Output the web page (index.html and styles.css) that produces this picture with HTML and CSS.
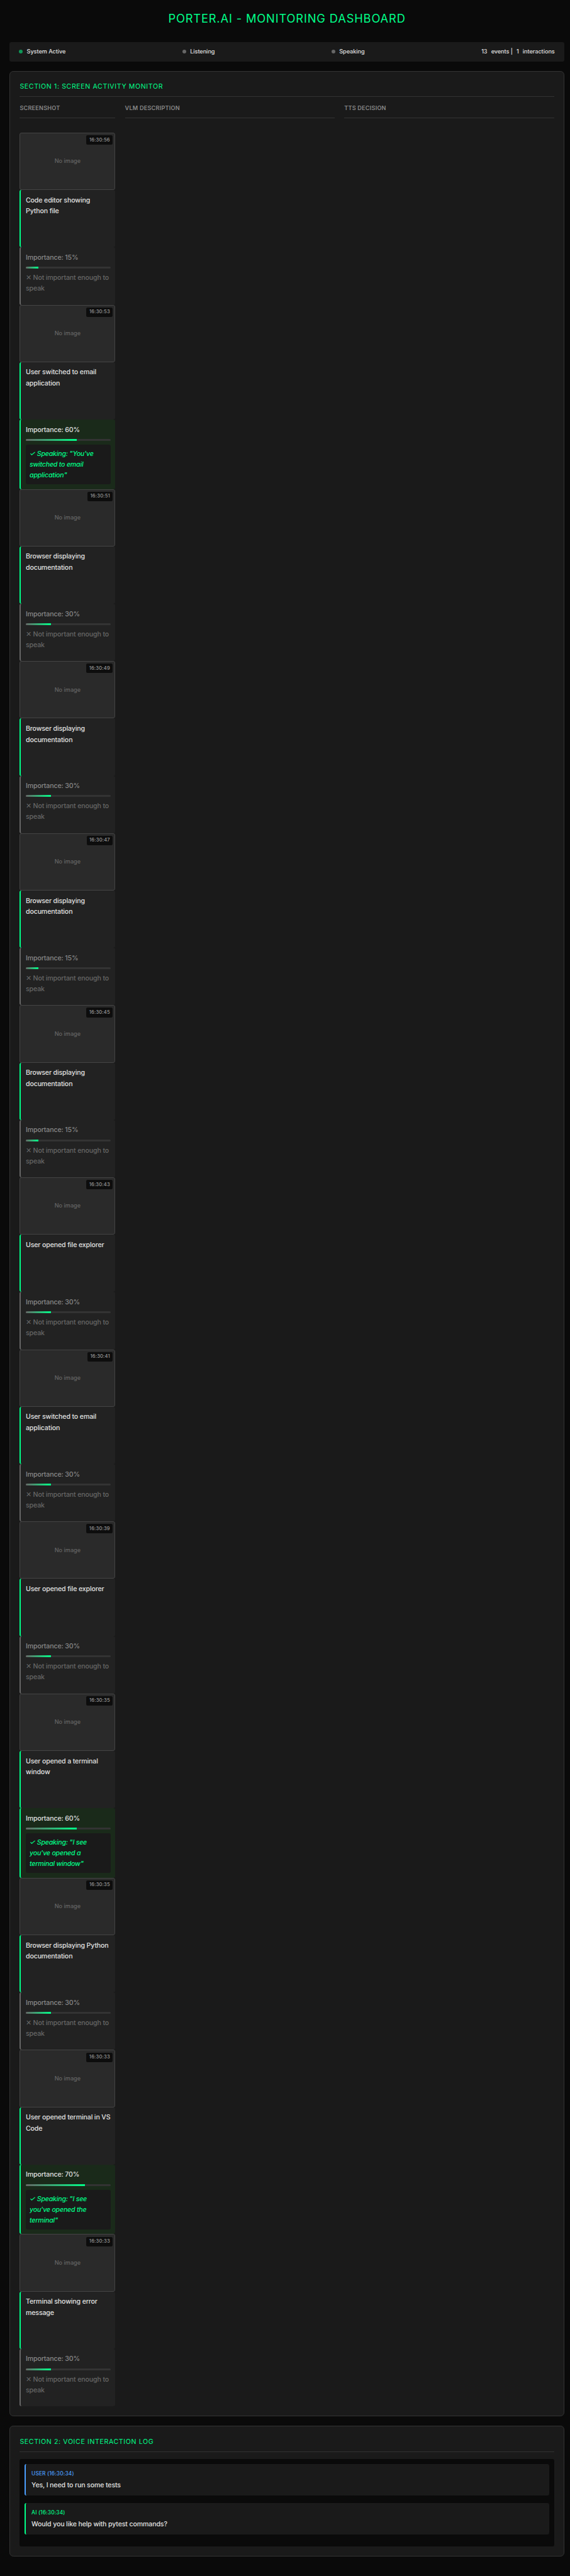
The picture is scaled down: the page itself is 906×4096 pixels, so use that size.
FILE: index.html
```html
<!DOCTYPE html>
<html lang="en">
<head>
<meta charset="utf-8">
<title>Porter.AI - Monitoring Dashboard</title>
<link rel="stylesheet" href="styles.css">
</head>
<body>
<div class="container">
  <h1>PORTER.AI - MONITORING DASHBOARD</h1>
  <div class="status-bar">
    <div class="status-item"><span class="dot active"></span><span>System Active</span></div>
    <div class="status-item"><span class="dot"></span><span>Listening</span></div>
    <div class="status-item"><span class="dot"></span><span>Speaking</span></div>
    <div class="status-item"><span>13</span><span>events |</span><span>1</span><span>interactions</span></div>
  </div>

  <section class="panel">
    <h2>SECTION 1: SCREEN ACTIVITY MONITOR</h2>
    <div class="columns">
      <div class="column-title">SCREENSHOT</div>
      <div class="column-title">VLM DESCRIPTION</div>
      <div class="column-title">TTS DECISION</div>
    </div>
    <div class="events" id="events"></div>
  </section>

  <section class="panel">
    <h2>SECTION 2: VOICE INTERACTION LOG</h2>
    <div class="log">
      <div class="message user"><div class="who">USER (16:30:34)</div><div class="said">Yes, I need to run some tests</div></div>
      <div class="message ai"><div class="who">AI (16:30:34)</div><div class="said">Would you like help with pytest commands?</div></div>
    </div>
  </section>
</div>
<script src="events.js"></script>
</body>
</html>
```
FILE: styles.css
```css
* { margin: 0; padding: 0; box-sizing: border-box; }
html { background: #0a0a0a; font-size: 7.601px; }
body {
  padding: 2rem 0 0 2rem;
  background: #0a0a0a;
  color: #e0e0e0;
  font-family: Inter, "Liberation Sans", sans-serif;
  font-size: 1.4rem;
  font-weight: 500;
  line-height: 1.6;
  letter-spacing: -0.02rem;
}
.container { width: 116rem; }
h1 {
  margin-bottom: 3rem;
  color: #00ff88;
  font-size: 2.4rem;
  font-weight: 400;
  letter-spacing: 0.114rem;
  text-align: center;
}
.status-bar {
  display: flex;
  justify-content: space-between;
  align-items: center;
  height: 4rem;
  margin-bottom: 2rem;
  padding: 0 2rem;
  border-radius: 0.4rem;
  background: #1a1a1a;
  font-size: 1.2rem;
  letter-spacing: -0.005rem;
}
.status-item { display: flex; align-items: center; gap: 0.8rem; }
.dot { width: 0.8rem; height: 0.8rem; border-radius: 50%; background: #666; }
.dot.active { background: #0f9657; }
.panel {
  margin-bottom: 2rem;
  padding: 2rem;
  border: 1px solid #333;
  border-radius: 0.8rem;
  background: #1a1a1a;
}
.panel:last-child { margin-bottom: 0; }
h2 {
  height: 3.3rem;
  margin-bottom: 1.5rem;
  border-bottom: 1px solid #333;
  color: #00ff88;
  font-size: 1.4rem;
  font-weight: 400;
  letter-spacing: 0.079rem;
}
.columns {
  display: grid;
  grid-template-columns: 20rem 1fr 1fr;
  gap: 2rem;
  margin-bottom: 3rem;
}
.column-title {
  height: 3rem;
  border-bottom: 1px solid #333;
  color: #888;
  font-size: 1.2rem;
  font-weight: 600;
  letter-spacing: 0.028rem;
}
.events { width: 20rem; }
.shot {
  position: relative;
  display: flex;
  align-items: center;
  justify-content: center;
  height: 12rem;
  border: 1px solid #444;
  border-radius: 0.4rem;
  background: #2a2a2a;
  color: #666;
  font-size: 1.2rem;
  letter-spacing: 0;
}
.time {
  position: absolute;
  top: 0.4rem;
  right: 0.4rem;
  padding: 0.2rem 0.6rem;
  border-radius: 0.3rem;
  background: #0d0d0d;
  color: #999;
  font-size: 1rem;
  letter-spacing: 0.02rem;
}
.description, .decision {
  padding: 1rem;
  border-left: 0.3rem solid #00ff88;
  border-radius: 0.4rem;
  background: #222;
}
.description { height: 12rem; line-height: 2.3rem; }
.decision { min-height: 12rem; border-left-color: #666; color: #888; }
.decision.speak { border-left-color: #00ff88; background: #1a2a1a; color: #e0e0e0; }
.bar { height: 0.4rem; margin: 0.8rem 0; border-radius: 0.2rem; background: #333; overflow: hidden; }
.fill { height: 100%; background: linear-gradient(90deg, #666, #00ff88); }
.silent { color: #666; }
.speech {
  padding: 0.8rem;
  border-radius: 0.4rem;
  background: #1a1a1a;
  color: #00ff88;
  font-style: italic;
  letter-spacing: -0.03rem;
}
.log { padding: 1rem; border-radius: 0.4rem; background: #0a0a0a; }
.message {
  height: 6.64rem;
  margin-bottom: 1.5rem;
  padding: 1.2rem;
  border-left: 0.3rem solid #4a9eff;
  border-radius: 0.4rem;
  background: #1a1a1a;
}
.who { margin-bottom: 0.5rem; color: #4a9eff; font-size: 1.1rem; line-height: 1.76rem; letter-spacing: 0.017rem; }
.said { line-height: 2rem; }
.message.ai { border-left-color: #00ff88; }
.ai .who { color: #00ff88; }
```
FILE: events.js
```js
// time, description, importance in percent, spoken sentence (if any)
const events = [
  ["16:30:56", "Code editor showing Python file", 15],
  ["16:30:53", "User switched to email application", 60, "You've switched to email application"],
  ["16:30:51", "Browser displaying documentation", 30],
  ["16:30:49", "Browser displaying documentation", 30],
  ["16:30:47", "Browser displaying documentation", 15],
  ["16:30:45", "Browser displaying documentation", 15],
  ["16:30:43", "User opened file explorer", 30],
  ["16:30:41", "User switched to email application", 30],
  ["16:30:39", "User opened file explorer", 30],
  ["16:30:35", "User opened a terminal window", 60, "I see you've opened a terminal window"],
  ["16:30:35", "Browser displaying Python documentation", 30],
  ["16:30:33", "User opened terminal in VS Code", 70, "I see you've opened the terminal"],
  ["16:30:33", "Terminal showing error message", 30],
];

document.getElementById("events").innerHTML = events.map(([time, text, score, speech]) => `
  <div class="shot">No image<span class="time">${time}</span></div>
  <div class="description">${text}</div>
  <div class="decision${speech ? " speak" : ""}">
    <div>Importance: ${score}%</div>
    <div class="bar"><div class="fill" style="width:${score}%"></div></div>
    ${speech ? `<div class="speech">✓ Speaking: "${speech}"</div>` : `<div class="silent">✕ Not important enough to speak</div>`}
  </div>`).join("");
```
